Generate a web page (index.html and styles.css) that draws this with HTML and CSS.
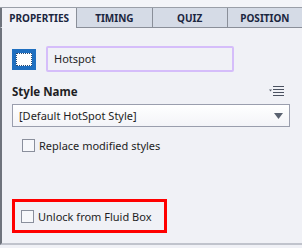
FILE: index.html
```html
<!DOCTYPE html>
<html>
<head>
<meta charset="utf-8">
<link rel="stylesheet" href="styles.css">
</head>
<body>
<div class="panel">
  <div class="tabs">
    <div class="tab active">PROPERTIES</div>
    <div class="tab">TIMING</div>
    <div class="tab">QUIZ</div>
    <div class="tab">POSITION</div>
  </div>
  <div class="content">
    <div class="name-row">
      <div class="shape-icon"><div class="shape-inner"></div></div>
      <div class="name-input">Hotspot</div>
    </div>
    <div class="style-head">
      <div class="label">Style Name</div>
      <svg class="menu-icon" width="16" height="11" viewBox="0 0 16 11">
        <path d="M0 3.5h3l-1.5 2z" fill="#5a6270"/>
        <rect x="4" y="0" width="11" height="1" fill="#4a5160"/>
        <rect x="4" y="3" width="11" height="1" fill="#4a5160"/>
        <rect x="4" y="6" width="11" height="1" fill="#4a5160"/>
        <rect x="4" y="9" width="11" height="1" fill="#4a5160"/>
      </svg>
    </div>
    <div class="select">
      <span>[Default HotSpot Style]</span>
      <svg width="9" height="6" viewBox="0 0 9 6"><path d="M0 0h9l-4.5 6z" fill="#5a6270"/></svg>
    </div>
    <label class="check">
      <span class="box"></span><span>Replace modified styles</span>
    </label>
    <div class="spacer"></div>
    <div class="highlight">
      <label class="check">
        <span class="box"></span><span>Unlock from Fluid Box</span>
      </label>
    </div>
  </div>
</div>
</body>
</html>
```
FILE: styles.css
```css
html, body {
  margin: 0;
  padding: 0;
  background: #f0f1f6;
}
body {
  width: 302px;
  height: 248px;
  overflow: hidden;
  font-family: "Noto Sans", "DejaVu Sans", sans-serif;
  color: #1e1e24;
}
.panel {
  padding-top: 7px;
  background: #f3f4f8;
}
.tabs {
  display: flex;
  height: 20px;
  border-top: 1px solid #9a9fa8;
}
.tab {
  flex: 1;
  display: flex;
  align-items: center;
  justify-content: center;
  font-size: 10px;
  font-weight: bold;
  color: #1b2640;
  background: #d5dbe6;
  border-left: 1px solid #8a8f99;
  border-bottom: 1px solid #8a8f99;
}
.tab:first-child {
  border-left: 2px solid #6e737c;
}
.tab.active {
  background: #f1f2f7;
  border-bottom-color: transparent;
}
.content {
  border-left: 2px solid #6e737c;
  border-bottom: 2px solid #c0c3cc;
  background: #f0f1f6;
  height: 217px;
  padding: 0 12px 0 10px;
  box-sizing: border-box;
}
.name-row {
  display: flex;
  align-items: center;
  padding-top: 18px;
  gap: 10px;
}
.shape-icon {
  width: 24px;
  height: 21px;
  background: #1f6fc0;
  display: flex;
  align-items: center;
  justify-content: center;
}
.shape-inner {
  width: 14px;
  height: 11px;
  background: #fff;
  border: 1px dotted #2a4a70;
}
.name-input {
  width: 178px;
  height: 22px;
  border: 2px solid #d5bdfa;
  border-radius: 2px;
  font-size: 11px;
  line-height: 22px;
  padding-left: 6px;
  box-sizing: content-box;
}
.style-head {
  display: flex;
  justify-content: space-between;
  align-items: center;
  margin-top: 12px;
  padding-right: 5px;
}
.label {
  font-size: 11.5px;
  font-weight: bold;
}
.select {
  margin-top: 5px;
  height: 21px;
  border: 1px solid #9a9ead;
  background: linear-gradient(#ffffff, #f3f4f8);
  display: flex;
  align-items: center;
  justify-content: space-between;
  padding: 0 6px 0 6px;
  font-size: 11px;
}
.check {
  display: flex;
  align-items: center;
  gap: 4px;
  font-size: 11px;
  margin-top: 11px;
  margin-left: 10px;
}
.box {
  width: 11px;
  height: 11px;
  border: 1px solid #8a8f9c;
  background: #f7f8fb;
}
.spacer {
  height: 46px;
}
.highlight {
  width: 149px;
  height: 28px;
  border: 3px solid #ff0000;
  display: flex;
  align-items: center;
}
.highlight .check {
  margin: 0 0 0 6px;
}
```
